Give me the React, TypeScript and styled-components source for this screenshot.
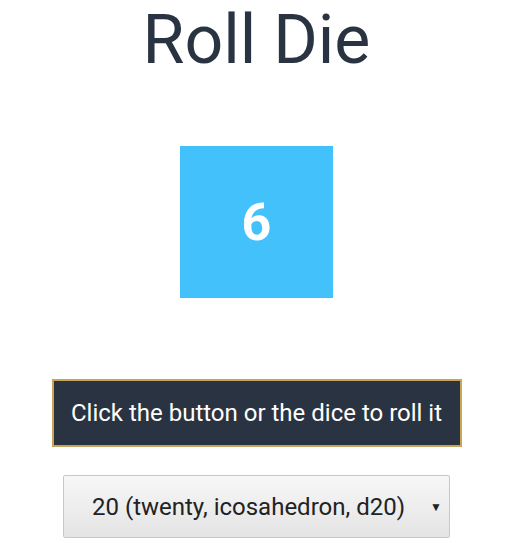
import styled, { createGlobalStyle } from 'styled-components';

const GlobalStyle = createGlobalStyle`
   body {
      margin: 0;
      background: #ffffff;
      font-family: Roboto, 'Liberation Sans', sans-serif;
   }
`;

const PageStyled = styled.div`
   display: flex;
   flex-direction: column;
   align-items: center;
   width: 100%;
`;

const TitleStyled = styled.h1`
   margin: 0;
   font-size: 68px;
   line-height: 80px;
   font-weight: 400;
   color: #2a3341;
`;

const DieStyled = styled.div`
   display: flex;
   align-items: center;
   justify-content: center;
   margin-top: 66px;
   width: 153px;
   height: 152px;
   background: #43c1fa;
   color: #ffffff;
   font-size: 52px;
   font-weight: 700;
   cursor: pointer;
`;

const RollButtonStyled = styled.button`
   box-sizing: border-box;
   margin-top: 81px;
   width: 410px;
   height: 68px;
   padding: 0;
   background: #2a3341;
   border: 2px solid #c8a457;
   color: #ffffff;
   font-family: Roboto, 'Liberation Sans', sans-serif;
   font-size: 24px;
   cursor: pointer;
`;

const SelectWrapStyled = styled.div`
   position: relative;
   margin-top: 28px;
`;

const SelectStyled = styled.select`
   box-sizing: border-box;
   appearance: none;
   width: 387px;
   height: 63px;
   padding: 0 0 0 28px;
   border: 1px solid #c8c8c8;
   border-radius: 2px;
   background: linear-gradient(#f7f7f7, #e4e4e4);
   color: #222222;
   font-family: Roboto, 'Liberation Sans', sans-serif;
   font-size: 24px;
`;

const ArrowStyled = styled.span`
   position: absolute;
   right: 8px;
   top: 50%;
   transform: translateY(-50%);
   font-size: 12px;
   color: #222222;
   pointer-events: none;
`;

const sides = [
   { value: 4, label: '4 (four, tetrahedron, d4)' },
   { value: 6, label: '6 (six, cube, d6)' },
   { value: 8, label: '8 (eight, octahedron, d8)' },
   { value: 10, label: '10 (ten, pentagonal trapezohedron, d10)' },
   { value: 12, label: '12 (twelve, dodecahedron, d12)' },
   { value: 20, label: '20 (twenty, icosahedron, d20)' },
];

const App = () => {
   return (
      <PageStyled>
         <GlobalStyle />
         <TitleStyled>Roll Die</TitleStyled>
         <DieStyled>6</DieStyled>
         <RollButtonStyled>Click the button or the dice to roll it</RollButtonStyled>
         <SelectWrapStyled>
            <SelectStyled defaultValue={20}>
               {sides.map(({ value, label }) => (
                  <option key={value} value={value}>
                     {label}
                  </option>
               ))}
            </SelectStyled>
            <ArrowStyled>▼</ArrowStyled>
         </SelectWrapStyled>
      </PageStyled>
   );
};

export default App;
